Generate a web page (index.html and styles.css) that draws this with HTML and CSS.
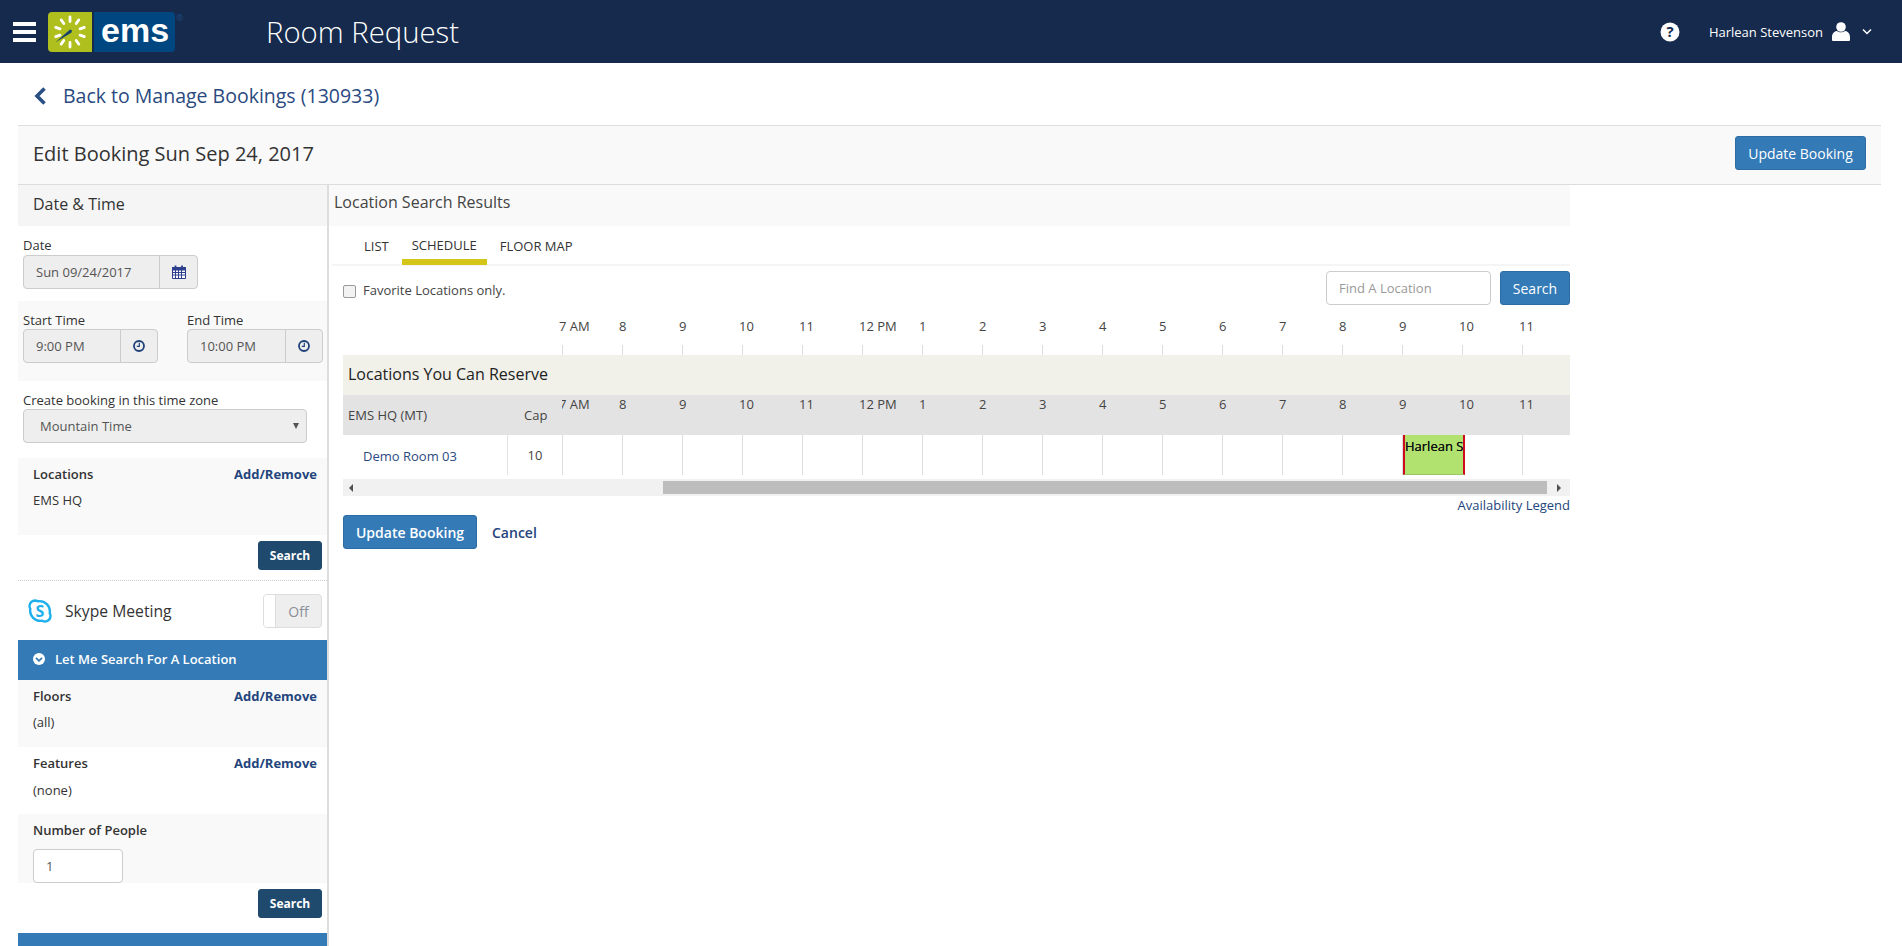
FILE: index.html
```html
<!DOCTYPE html>
<html lang="en">
<head>
<meta charset="utf-8">
<title>Room Request</title>
<link rel="stylesheet" href="styles.css">
</head>
<body>
<header class="topbar">
  <div class="hamburger"><span></span><span></span><span></span></div>
  <div class="logo">
    <div class="logo-mark">
      <svg width="44" height="40" viewBox="0 0 44 40">
        <g stroke="#fff" stroke-width="2.8" stroke-linecap="round">
          <path d="M22 9.500V5M28.200 11.500l2.600-3.600M32 16.800l4.300-1.400M32 23.200l4.300 1.400M28.200 28.500l2.600 3.600M22 30.500V35M15.800 28.500l-2.600 3.600M12 23.200l-4.300 1.400M12 16.800l-4.300-1.400M15.800 11.500l-2.600-3.600"/>
        </g>
        <path d="M7.700 30.300 L22 17.500 L24 18.500 L23.500 20.500 Z" fill="#14406e"/>
      </svg>
    </div>
    <div class="logo-word">ems</div>
    <span class="logo-reg">®</span>
  </div>
  <div class="app-title">Room Request</div>
  <div class="top-right">
    <svg class="help" width="20" height="20" viewBox="0 0 20 20"><circle cx="10" cy="10" r="9.500" fill="#fff"/><text x="10" y="15" text-anchor="middle" class="help-mark">?</text></svg>
    <span class="user-name">Harlean Stevenson</span>
    <svg class="user" width="18" height="19" viewBox="0 0 18 19"><circle cx="9" cy="5" r="4.800" fill="#fff"/><path d="M1 19a1 1 0 0 1-1-1v-3c0-3.500 2.500-6 5-6 1 .8 2.500 1.300 4 1.300s3-.5 4-1.300c2.500 0 5 2.500 5 6v3a1 1 0 0 1-1 1z" fill="#fff"/></svg>
    <svg class="caret" width="10" height="7" viewBox="0 0 10 7"><path d="M1 1.500l4 4 4-4" fill="none" stroke="#fff" stroke-width="1.500"/></svg>
  </div>
</header>

<div class="page">
  <div class="back">
    <svg width="14" height="18" viewBox="0 0 14 18"><path d="M11.500 1.500 4 9l7.500 7.500" fill="none" stroke="#2a4f85" stroke-width="3.600"/></svg>
    <a class="back-link">Back to Manage Bookings (130933)</a>
  </div>
  <div class="title-bar">
    <h1>Edit Booking Sun Sep 24, 2017</h1>
    <button class="btn btn-primary btn-title">Update Booking</button>
  </div>

  <div class="columns">
    <aside class="sidebar">
      <div class="side-head">Date &amp; Time</div>

      <div class="date-block">
        <label>Date</label>
        <div class="group group-date">
          <span class="group-value">Sun 09/24/2017</span>
          <span class="group-addon">
            <svg width="14" height="14" viewBox="0 0 14 14"><path d="M.5 2.500h13v11H.5z" fill="#fff" stroke="#2c3e8c"/><path d="M.5 2.500h13v2.500H.5z" fill="#2c3e8c" stroke="#2c3e8c"/><path d="M.5 7.500h13M.5 10h13M3.500 5v8M6.500 5v8M9.500 5v8" stroke="#2c3e8c" stroke-width="1"/><path d="M3.500 .5v3M10 .5v3" stroke="#2c3e8c" stroke-width="1.800"/></svg>
          </span>
        </div>
      </div>

      <div class="time-block">
        <div class="time-field">
          <label>Start Time</label>
          <div class="group group-time">
            <span class="group-value">9:00 PM</span>
            <span class="group-addon"><svg width="12" height="12" viewBox="0 0 12 12"><circle cx="6" cy="6" r="5" fill="none" stroke="#1f3f78" stroke-width="1.800"/><path d="M6.300 2.800v3.500H3.800" fill="none" stroke="#1f3f78" stroke-width="1.200"/></svg></span>
          </div>
        </div>
        <div class="time-field">
          <label>End Time</label>
          <div class="group group-time group-end">
            <span class="group-value">10:00 PM</span>
            <span class="group-addon"><svg width="12" height="12" viewBox="0 0 12 12"><circle cx="6" cy="6" r="5" fill="none" stroke="#1f3f78" stroke-width="1.800"/><path d="M6.300 2.800v3.500H3.800" fill="none" stroke="#1f3f78" stroke-width="1.200"/></svg></span>
          </div>
        </div>
      </div>

      <div class="zone-block">
        <label>Create booking in this time zone</label>
        <div class="select"><span>Mountain Time</span><i class="select-arrow"></i></div>
      </div>

      <div class="filter filter-shaded filter-loc">
        <div class="filter-head"><b>Locations</b><a>Add/Remove</a></div>
        <div class="filter-value">EMS HQ</div>
      </div>
      <div class="search-row"><button class="btn btn-dark">Search</button></div>

      <div class="skype">
        <svg class="skype-icon" width="24" height="24" viewBox="0 0 24 24"><path d="M7 1.500a5.500 5.500 0 0 0-5.500 5.500c0 1 .3 2 .8 2.800A10.300 10.300 0 0 0 14.200 21.700 5.500 5.500 0 0 0 22.500 17c0-1-.3-2-.8-2.800A10.300 10.300 0 0 0 9.800 2.300 5.500 5.500 0 0 0 7 1.500z" fill="#fff" stroke="#1fb0ec" stroke-width="2.400"/><text x="12" y="17.800" text-anchor="middle" class="skype-s">S</text></svg>
        <span class="skype-label">Skype Meeting</span>
        <div class="toggle"><span class="toggle-knob"></span><span class="toggle-text">Off</span></div>
      </div>

      <div class="accordion">
        <svg width="12" height="12" viewBox="0 0 12 12"><circle cx="6" cy="6" r="6" fill="#fff"/><path d="M3 4.800l3 3 3-3" fill="none" stroke="#337ab7" stroke-width="1.800"/></svg>
        <span>Let Me Search For A Location</span>
      </div>

      <div class="filter filter-shaded">
        <div class="filter-head"><b>Floors</b><a>Add/Remove</a></div>
        <div class="filter-value">(all)</div>
      </div>
      <div class="filter">
        <div class="filter-head"><b>Features</b><a>Add/Remove</a></div>
        <div class="filter-value filter-value-low">(none)</div>
      </div>
      <div class="filter filter-shaded filter-people">
        <div class="filter-head"><b>Number of People</b></div>
        <div class="people-input">1</div>
      </div>
      <div class="search-row search-row-2"><button class="btn btn-dark">Search</button></div>
      <div class="accordion accordion-2"></div>
    </aside>

    <main class="results">
      <div class="results-head">Location Search Results</div>
      <nav class="tabs">
        <a class="tab">LIST</a>
        <a class="tab tab-active">SCHEDULE</a>
        <a class="tab">FLOOR MAP</a>
      </nav>
      <div class="content">
        <div class="tools">
          <span class="check"></span>
          <span class="check-label">Favorite Locations only.</span>
          <span class="find">Find A Location</span>
          <button class="btn btn-primary btn-search">Search</button>
        </div>

        <div class="top-hours">
          <div class="hours">
            <span>7 AM</span><span>8</span><span>9</span><span>10</span><span>11</span><span>12 PM</span><span>1</span><span>2</span><span>3</span><span>4</span><span>5</span><span>6</span><span>7</span><span>8</span><span>9</span><span>10</span><span>11</span>
          </div>
        </div>
        <div class="tick-row">
          <i></i><i></i><i></i><i></i><i></i><i></i><i></i><i></i><i></i><i></i><i></i><i></i><i></i><i></i><i></i><i></i><i></i>
        </div>

        <div class="group-band">Locations You Can Reserve</div>

        <div class="sched-head">
          <div class="col-name">EMS HQ (MT)</div>
          <div class="col-cap">Cap</div>
          <div class="hours hours-clip">
            <span>7 AM</span><span>8</span><span>9</span><span>10</span><span>11</span><span>12 PM</span><span>1</span><span>2</span><span>3</span><span>4</span><span>5</span><span>6</span><span>7</span><span>8</span><span>9</span><span>10</span><span>11</span>
          </div>
        </div>

        <div class="sched-row">
          <a class="row-name">Demo Room 03</a>
          <div class="row-cap">10</div>
          <div class="row-cells">
            <i></i><i></i><i></i><i></i><i></i><i></i><i></i><i></i><i></i><i></i><i></i><i></i><i></i><i></i><i></i><i></i><i></i>
            <div class="booking">Harlean Stevenson</div>
          </div>
        </div>

        <div class="hscroll">
          <span class="arrow-left"></span>
          <span class="thumb"></span>
          <span class="arrow-right"></span>
        </div>
        <div class="legend"><a>Availability Legend</a></div>
        <div class="actions">
          <button class="btn btn-primary btn-update">Update Booking</button>
          <a class="cancel">Cancel</a>
        </div>
      </div>
    </main>
  </div>
</div>
</body>
</html>
```

FILE: styles.css
```css
* { box-sizing: border-box; }
html, body { height: 946px; overflow: hidden; }
body {
  margin: 0;
  background: #fff;
  color: #333;
  font-family: "Open Sans", "Liberation Sans", sans-serif;
  font-size: 13px;
}
a { color: #23457c; }
label { display: block; font-size: 13px; line-height: 16px; color: #333; }

/* Top bar */
.topbar {
  height: 63px;
  background: #152a4d;
  display: flex;
  align-items: center;
  color: #fff;
}
.hamburger { width: 23px; margin-left: 13px; display: flex; flex-direction: column; gap: 4px; }
.hamburger span { display: block; height: 4px; background: #fff; }
.logo { display: flex; margin-left: 12px; height: 40px; position: relative; width: 127px; }
.logo-mark { width: 44px; height: 40px; background: #afbf1e; border-radius: 4px 0 0 4px; }
.logo-mark svg { display: block; }
.logo-word {
  margin-left: 2px;
  width: 81px;
  height: 40px;
  background: #004680;
  border-radius: 0 4px 4px 0;
  color: #fff;
  font: 700 34px/37px "Liberation Sans", sans-serif;
  padding-left: 7px;
}
.logo-reg { position: absolute; left: 128px; top: 0; font-size: 9px; line-height: 12px; color: #1f4a80; }
.app-title {
  margin-left: 91px;
  font-size: 29.300px;
  font-weight: 300;
  color: #fff;
}
.top-right { margin-left: auto; display: flex; align-items: center; margin-right: 30px; }
.help-mark { font: 700 15px "Open Sans", sans-serif; fill: #152a4d; }
.user-name { margin-left: 29px; font-size: 13px; color: #fff; }
.user { margin-left: 9px; }
.caret { margin-left: 12px; }

/* Page */
.page { padding: 0 21px 0 18px; }
.back { height: 62px; display: flex; align-items: center; gap: 16px; padding-left: 15px; padding-top: 3px; }
.back-link { font-size: 19.500px; color: #2a4a80; }
.title-bar {
  height: 60px;
  border-top: 1px solid #ddd;
  border-bottom: 1px solid #ddd;
  background: #f9f9f9;
  display: flex;
  align-items: center;
  justify-content: space-between;
  padding: 0 15px 3px;
}
.title-bar h1 { margin: 0; font-size: 20px; font-weight: 400; color: #333; }
.btn-title { margin-bottom: 1px; }

/* Buttons */
.btn {
  font-family: inherit;
  border-radius: 3px;
  border: 1px solid #2e6da4;
  cursor: pointer;
  padding: 0;
}
.btn-primary {
  width: 131px;
  height: 34px;
  background: #337ab7;
  color: #fff;
  font-size: 14px;
}
.btn-dark {
  width: 64px;
  height: 29px;
  background: #1f4a6e;
  border-color: #1f4a6e;
  color: #fff;
  font-size: 12px;
  font-weight: 700;
}

/* Columns */
.columns { display: flex; align-items: flex-start; }
.sidebar { width: 311px; flex: none; border-right: 2px solid #ddd; height: 800px; }
.side-head {
  height: 41px;
  background: #f5f5f5;
  padding: 0 15px;
  font-size: 16px;
  line-height: 39px;
  color: #333;
}

/* Form groups */
.date-block { padding: 11px 15px 13px 5px; height: 75px; }
.group {
  display: flex;
  height: 34px;
  margin-top: 1px;
  background: #eee;
  border: 1px solid #ccc;
  border-radius: 4px;
  font-size: 13px;
  color: #555;
}
.date-block .group { margin-top: 2px; }
.group-date { width: 175px; }
.group-time { width: 135px; }
.group-end { width: 136px; }
.group-value { flex: 1; padding-left: 12px; line-height: 32px; }
.group-addon {
  display: flex;
  align-items: center;
  justify-content: center;
  border-left: 1px solid #ccc;
}
.group-date .group-addon { width: 38px; }
.group-time .group-addon { width: 37px; }
.time-block {
  height: 80px;
  background: #f9f9f9;
  padding: 11px 5px 0;
  display: flex;
  gap: 29px;
}
.zone-block { height: 77px; padding: 11px 5px 0; }
.select {
  margin-top: 1px;
  width: 284px;
  height: 34px;
  background: #eee;
  border: 1px solid #ccc;
  border-radius: 4px;
  padding-left: 16px;
  display: flex;
  align-items: center;
  justify-content: space-between;
  color: #555;
}
.select-arrow {
  width: 0;
  height: 0;
  margin-right: 7px;
  border-left: 3px solid transparent;
  border-right: 3px solid transparent;
  border-top: 6px solid #555;
}

/* Filters */
.filter { height: 67px; padding: 8px 10px 0 15px; color: #333; }
.filter-shaded { background: #f9f9f9; }
.filter-loc { height: 77px; }
.filter-head { display: flex; justify-content: space-between; line-height: 16px; font-size: 13px; }
.filter-head b { font-weight: 600; color: #333; }
.filter-head a { font-weight: 700; color: #23457c; }
.filter-value { margin-top: 10px; font-size: 13px; line-height: 16px; }
.filter-value-low { margin-top: 11px; }
.search-row { display: flex; justify-content: flex-end; padding: 6px 5px 0 0; height: 46px; border-bottom: 1px dotted #ccc; }
.search-row-2 { height: 50px; border-bottom: 0; }

.skype { height: 59px; display: flex; align-items: center; padding: 0 5px 0 10px; }
.skype-s { font: 700 16px "Open Sans", sans-serif; fill: #1fb0ec; }
.skype-label { margin-left: 13px; font-size: 15.700px; color: #333; line-height: 22px; padding-top: 1px; }
.toggle {
  margin-left: auto;
  width: 59px;
  height: 34px;
  display: flex;
  background: #eee;
  border: 1px solid #ddd;
  border-radius: 4px;
  overflow: hidden;
}
.toggle-knob { width: 12px; background: #fff; border-right: 1px solid #ddd; }
.toggle-text { flex: 1; text-align: center; line-height: 34px; color: #8a8f99; font-size: 14px; }
.accordion {
  height: 40px;
  background: #337ab7;
  color: #fff;
  display: flex;
  align-items: center;
  gap: 10px;
  padding: 0 0 2px 15px;
  font-size: 13px;
  font-weight: 600;
}
.filter-people { height: 69px; }
.people-input {
  width: 90px;
  height: 34px;
  margin-top: 11px;
  background: #fff;
  border: 1px solid #ccc;
  border-radius: 4px;
  padding-left: 12px;
  line-height: 32px;
  color: #555;
}

/* Results */
.results { width: 1241px; flex: none; }
.results-head {
  height: 41px;
  background: #f9f9f9;
  padding-left: 5px;
  font-size: 16px;
  line-height: 34px;
  color: #444;
}
.tabs {
  height: 40px;
  margin-left: 3px;
  border-bottom: 2px solid #f5f5f5;
  display: flex;
  padding-left: 22px;
}
.tab { padding: 11px 12px 0 10px; font-size: 13px; line-height: 18px; color: #333; height: 39px; }
.tab:first-child { padding-right: 13px; }
.tab-active { padding: 10px 10px 0; margin: 0 3px 0 0; border-bottom: 6px solid #d4c619; width: 85px; }
.content { padding-left: 14px; }

.tools { height: 39px; padding-top: 5px; display: flex; align-items: center; }
.check {
  width: 13px;
  height: 13px;
  margin-top: 6px;
  background: #f2f2f2;
  border: 1px solid #999;
  border-radius: 2px;
}
.check-label { margin: 4px 0 0 7px; font-size: 13px; color: #444; }
.find {
  margin-left: auto;
  width: 165px;
  height: 34px;
  border: 1px solid #ccc;
  border-radius: 4px;
  padding-left: 12px;
  line-height: 32px;
  color: #999;
}
.btn-search { width: 70px; margin-left: 9px; }

/* Schedule */
.top-hours { height: 40px; padding: 12px 0 0 219px; }
.hours { display: flex; width: 1008px; font-size: 13px; line-height: 18px; color: #444; }
.hours span { flex: 0 0 60px; text-indent: -3px; white-space: nowrap; }
.tick-row { height: 10px; padding-left: 219px; display: flex; }
.tick-row i { flex: 0 0 60px; border-left: 1px solid #ddd; }
.group-band {
  height: 40px;
  background: #f1f0e9;
  padding-left: 5px;
  font-size: 16px;
  line-height: 38px;
  color: #222;
}
.sched-head { height: 40px; background: #e3e3e3; display: flex; color: #444; }
.col-name { width: 165px; flex: none; padding: 11px 0 0 5px; line-height: 18px; }
.col-cap { width: 54px; flex: none; padding: 11px 0 0 16px; line-height: 18px; }
.hours-clip { overflow: hidden; height: 40px; }
.sched-row { height: 40px; display: flex; }
.row-name {
  width: 165px;
  flex: none;
  border-right: 1px solid #e3e3e3;
  padding: 12px 0 0 20px;
  line-height: 18px;
  color: #2a4a80;
}
.row-cap { width: 54px; flex: none; text-align: center; padding-top: 11px; line-height: 18px; color: #444; }
.row-cells { flex: 1; display: flex; position: relative; overflow: hidden; }
.row-cells i { flex: 0 0 60px; border-left: 1px solid #ddd; }
.booking {
  position: absolute;
  left: 841px;
  top: 0;
  width: 62px;
  height: 40px;
  background: #b1e26f;
  border-left: 2px solid #cf0a1e;
  border-right: 2px solid #cf0a1e;
  border-bottom: 1px solid #9cc464;
  color: #111;
  font-size: 13px;
  text-shadow: 0 0 .4px #111;
  line-height: 20px;
  white-space: nowrap;
  overflow: hidden;
  padding-top: 1px;
}
.hscroll {
  height: 17px;
  margin-top: 4px;
  background: #f1f1f1;
  display: flex;
  align-items: center;
}
.arrow-left, .arrow-right { width: 0; height: 0; border-top: 4px solid transparent; border-bottom: 4px solid transparent; }
.arrow-left { margin-left: 6px; border-right: 4px solid #505050; }
.thumb { margin-left: 310px; width: 884px; height: 13px; background: #bdbdbd; }
.arrow-right { margin-left: 10px; border-left: 4px solid #505050; }
.legend { text-align: right; line-height: 18px; height: 19px; color: #2a4a80; }
.actions { display: flex; align-items: center; gap: 15px; }
.btn-update { width: 134px; font-weight: 600; }
.cancel { color: #23457c; font-weight: 600; font-size: 14px; }
```
